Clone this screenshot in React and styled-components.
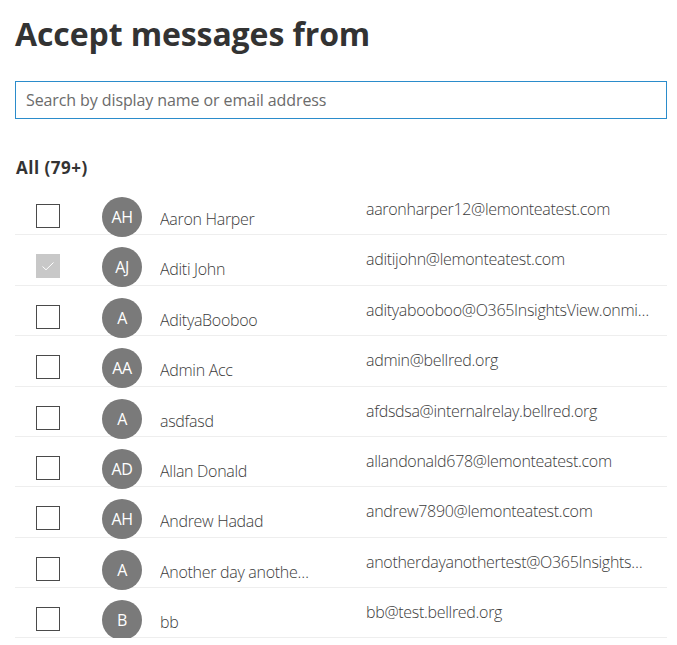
import React from "react";
import styled, { createGlobalStyle } from "styled-components";

const GlobalStyle = createGlobalStyle`
  body {
    margin: 0;
    background: #ffffff;
    font-family: "Open Sans", "Noto Sans", sans-serif;
    color: #333333;
  }
`;

const Page = styled.div`
  padding: 0 10px 0 15px;
`;

const Title = styled.h1`
  margin: 0;
  padding-top: 14px;
  font-size: 32px;
  line-height: 40px;
  font-weight: 700;
  color: #333333;
  letter-spacing: -0.1px;
`;

const Search = styled.input`
  display: block;
  box-sizing: border-box;
  width: 100%;
  height: 38px;
  margin-top: 27px;
  padding: 0 10px;
  border: 1px solid #2b8ccb;
  outline: none;
  font-family: inherit;
  font-size: 16px;
  letter-spacing: -0.1px;
  color: #333;

  &::placeholder {
    color: #6b6b6b;
  }
`;

const GroupLabel = styled.div`
  margin-top: 38px;
  padding-left: 1px;
  font-size: 17px;
  line-height: 22px;
  font-weight: 700;
  letter-spacing: 0.5px;
  color: #333333;
`;

const List = styled.div`
  margin-top: 6px;
`;

const Row = styled.div`
  box-sizing: border-box;
  height: 50.375px;
  display: grid;
  grid-template-columns: 66px 58px 206px 1fr;
  align-items: start;
  padding: 0 16px 0 21px;
  border-bottom: 1px solid #eeeeee;
`;

const Check = styled.div`
  box-sizing: border-box;
  width: 24px;
  height: 24px;
  margin-top: 19px;
  border: 1px solid ${(p) => (p.$checked ? "#c8c8c8" : "#4a4a4a")};
  background: ${(p) => (p.$checked ? "#c8c8c8" : "#ffffff")};
  display: flex;
  align-items: center;
  justify-content: center;
`;

const Avatar = styled.div`
  width: 40px;
  height: 40px;
  margin-top: 12px;
  border-radius: 50%;
  background: #7a7a7a;
  color: #ffffff;
  display: flex;
  align-items: center;
  justify-content: center;
  font-size: 16px;
  letter-spacing: -0.4px;
`;

const Name = styled.div`
  margin-top: 24px;
  max-width: 150px;
  font-size: 16px;
  line-height: 20px;
  font-weight: 300;
  letter-spacing: -0.3px;
  color: #3c3c3c;
  white-space: nowrap;
  overflow: hidden;
  text-overflow: ellipsis;
`;

const Email = styled(Name)`
  margin-top: 14px;
  max-width: none;
`;

const people = [
  ["AH", "Aaron Harper", "aaronharper12@lemonteatest.com"],
  ["AJ", "Aditi John", "aditijohn@lemonteatest.com", true],
  ["A", "AdityaBooboo", "adityabooboo@O365InsightsView.onmicrosoft.com"],
  ["AA", "Admin Acc", "admin@bellred.org"],
  ["A", "asdfasd", "afdsdsa@internalrelay.bellred.org"],
  ["AD", "Allan Donald", "allandonald678@lemonteatest.com"],
  ["AH", "Andrew Hadad", "andrew7890@lemonteatest.com"],
  ["A", "Another day another test", "anotherdayanothertest@O365InsightsView.onmicrosoft.com"],
  ["B", "bb", "bb@test.bellred.org"],
];

const CheckMark = () => (
  <svg width="16" height="16" viewBox="0 0 16 16">
    <path d="M2.5 8.5 L6 11.8 L13.5 4.5" fill="none" stroke="#ffffff" strokeWidth="1" />
  </svg>
);

export default function App() {
  return (
    <Page>
      <GlobalStyle />
      <Title>Accept messages from</Title>
      <Search placeholder="Search by display name or email address" />
      <GroupLabel>All (79+)</GroupLabel>
      <List>
        {people.map(([initials, name, email, checked], i) => (
          <Row key={i}>
            <Check $checked={checked}>{checked && <CheckMark />}</Check>
            <Avatar>{initials}</Avatar>
            <Name>{name}</Name>
            <Email>{email}</Email>
          </Row>
        ))}
      </List>
    </Page>
  );
}
